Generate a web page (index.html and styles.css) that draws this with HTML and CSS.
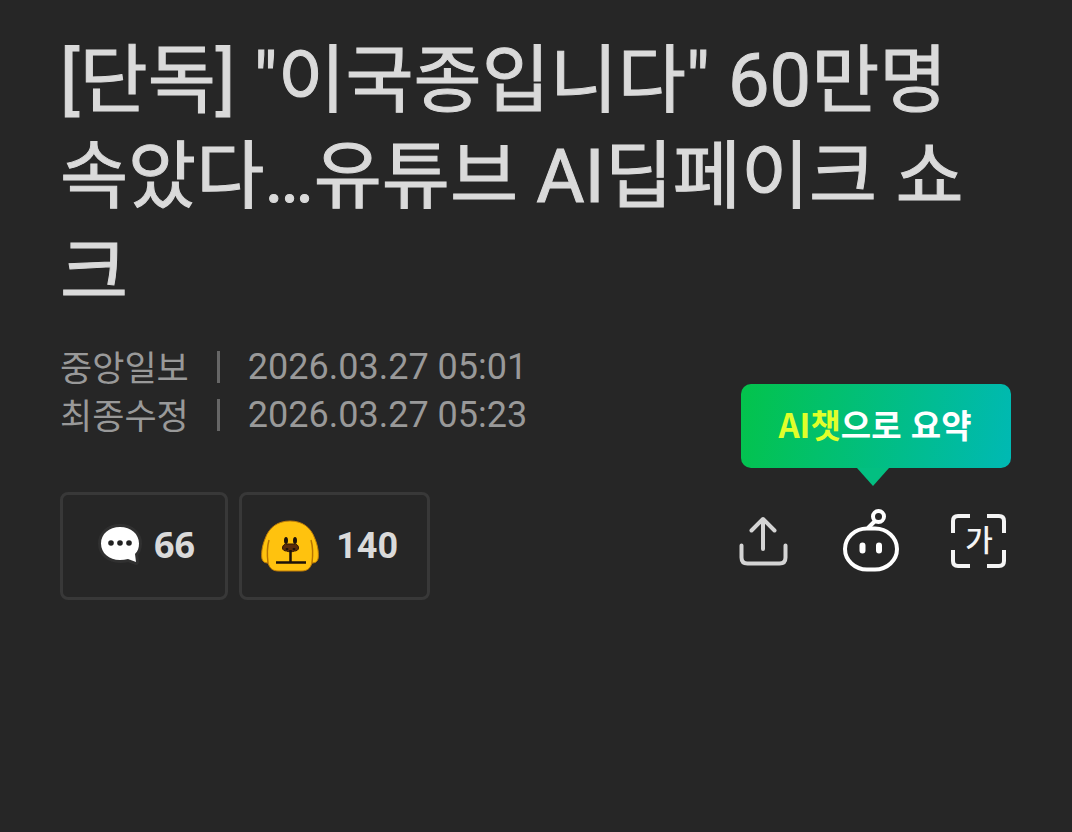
FILE: index.html
```html
<!DOCTYPE html>
<html lang="ko">
<head>
<meta charset="utf-8">
<meta name="viewport" content="width=device-width, initial-scale=1.0">
<title>[단독] "이국종입니다" 60만명 속았다…유튜브 AI딥페이크 쇼크</title>
<link rel="stylesheet" href="styles.css">
</head>
<body>
<main class="article">
  <h1 class="title">[단독] "이국종입니다" 60만명 속았다…유튜브 AI딥페이크 쇼크</h1>

  <dl class="meta">
    <div class="meta-row">
      <dt>중앙일보</dt>
      <dd><time datetime="2026-03-27T05:01">2026.03.27 05:01</time></dd>
    </div>
    <div class="meta-row">
      <dt>최종수정</dt>
      <dd><time datetime="2026-03-27T05:23">2026.03.27 05:23</time></dd>
    </div>
  </dl>

  <div class="toolbar">
    <div class="counts">
      <button class="count comment" type="button" aria-label="댓글 66">
        <svg width="46" height="50" viewBox="0 0 46 50" aria-hidden="true">
          <path d="M22 7C11 7 3 14 3 23.500S11 40 22 40q4 0 8-1l8 3-1-8c3-3 4-6 4-10.500C41 14 33 7 22 7z" fill="#fff" stroke="#303030" stroke-width="6" paint-order="stroke" stroke-linejoin="round"/>
          <circle cx="13" cy="23" r="2.800" fill="#222"/>
          <circle cx="22" cy="23" r="2.800" fill="#222"/>
          <circle cx="31" cy="23" r="2.800" fill="#222"/>
        </svg>
        <span>66</span>
      </button>
      <button class="count reaction" type="button" aria-label="공감 140">
        <svg width="58" height="52" viewBox="0 0 58 52" aria-hidden="true">
          <path d="M29 1C17 1 8 7 4 19 1 26 0 34 1 39c1 3 3 4 6 4 2 6 5 8 11 8h22c6 0 9-2 11-8 3 0 5-1 6-4 1-5 0-13-3-20C50 7 41 1 29 1z" fill="#ffc20e" stroke="#bd7b08" stroke-width="1"/>
          <path d="M8 20C6 27 6 35 7 43M50 20c2 7 2 15 1 23" fill="none" stroke="#b87400" stroke-width="1.500"/>
          <ellipse cx="25" cy="20.500" rx="2" ry="3.500" fill="#1c1209"/>
          <ellipse cx="34" cy="20.500" rx="2" ry="3.500" fill="#1c1209"/>
          <path d="M21.500 28c0-3 2-4 5-4h6c3 0 5 1 5 4 0 2-2 3-4 3-2 1-6 1-8 0-2 0-4-1-4-3z" fill="#5b2c0a" stroke="#2e1606" stroke-width="1"/>
          <path d="M26 28v2m7-2v2M29.500 30v12M15 42.500h30" fill="none" stroke="#1c1209" stroke-width="2.500"/>
        </svg>
        <span>140</span>
      </button>
    </div>

    <div class="tools">
      <button class="tool" type="button" aria-label="공유하기">
        <svg class="share" width="64" height="64" viewBox="0 0 64 64" aria-hidden="true">
          <path d="M31 41V11M19.500 22.500 31 11l11.500 11.500M9.500 37.500v12q0 6 6 6h32q6 0 6-6v-12"/>
        </svg>
      </button>
      <div class="summary">
        <button class="tool" type="button" aria-label="AI챗으로 요약" aria-describedby="summary-tip">
          <svg class="robot" width="64" height="64" viewBox="0 0 64 64" aria-hidden="true">
            <circle cx="39.500" cy="8.500" r="5.500"/>
            <path d="M36 13 29 20"/>
            <rect x="6" y="20.500" width="52" height="41" rx="22" ry="20.500"/>
            <path class="eyes" d="M23.500 37.500v5M40 37.500v5"/>
          </svg>
        </button>
        <div class="tip" id="summary-tip" role="tooltip"><em>AI챗</em>으로 요약</div>
      </div>
      <button class="tool" type="button" aria-label="글자 크기 변경">
        <svg class="frame" width="64" height="64" viewBox="0 0 64 64" aria-hidden="true">
          <path d="M7 25V13q0-5 5-5h12M41 8h12q5 0 5 5v12M58 42v11q0 5-5 5H41M24 58H12q-5 0-5-5V42"/>
          <text x="33" y="43">가</text>
        </svg>
      </button>
    </div>
  </div>
</main>
</body>
</html>
```

FILE: styles.css
```css
* {
  box-sizing: border-box;
}

body {
  margin: 0;
  background: #262626;
  color: #dadada;
  font-family: Roboto, "Noto Sans CJK KR", sans-serif;
}

.article {
  padding: 33px 60px;
}

.title {
  margin: 0;
  font-size: 74px;
  font-weight: 400;
  line-height: 96px;
  word-break: break-all;
  -webkit-text-stroke: 1px #dadada;
}

/* 언론사, 입력/수정 시각 */
.meta {
  margin: 22px 0 0;
  color: #999;
  font-size: 36px;
  line-height: 48px;
}

.meta-row {
  display: flex;
  align-items: flex-start;
}

.meta dt {
  font-family: "Noto Sans CJK KR", sans-serif;
  font-size: 35px;
  line-height: 45px;
}

.meta dd {
  display: flex;
  align-items: center;
  margin: 0;
}

.meta dd::before {
  content: "";
  width: 3px;
  height: 32px;
  margin: 0 28px;
  background: #666;
}

.toolbar {
  display: flex;
  justify-content: space-between;
  margin-top: 53px;
}

button {
  padding: 0;
  border: 0;
  background: none;
  color: inherit;
  font-family: inherit;
  cursor: pointer;
}

.counts {
  display: flex;
  gap: 11px;
}

.count {
  display: flex;
  align-items: center;
  height: 108px;
  border: 3px solid #383838;
  border-radius: 8px;
  font-size: 36px;
  font-weight: 700;
}

.comment {
  gap: 10px;
  padding: 0 30px 3px 35px;
  font-family: "Noto Sans", sans-serif;
}

.reaction {
  gap: 17px;
  padding: 0 29px 0 19px;
}

.tools {
  display: flex;
  align-items: flex-start;
  gap: 43px;
  margin-right: 2px;
  padding-top: 16px;
}

.tool {
  display: block;
}

.tool svg {
  display: block;
  fill: none;
  stroke: #f4f4f4;
  stroke-width: 4;
}

.tool .share {
  stroke: #d4d4d4;
  stroke-linecap: round;
  stroke-linejoin: round;
}

.tool .robot {
  stroke: #fff;
}

.robot .eyes {
  stroke-width: 6;
  stroke-linecap: round;
}

.frame text {
  fill: #f4f4f4;
  stroke: none;
  font-family: "Noto Sans CJK KR", sans-serif;
  font-size: 30px;
  font-weight: 500;
  text-anchor: middle;
}

.summary {
  position: relative;
}

/* 말풍선 */
.tip {
  position: absolute;
  right: -108px;
  bottom: 104px;
  width: 270px;
  padding: 0 2px 4px 0;
  border-radius: 10px;
  background: linear-gradient(100deg, #03c34b, #00b9b4);
  color: #fff;
  font-family: "Noto Sans CJK KR", sans-serif;
  font-size: 33px;
  font-weight: 700;
  line-height: 80px;
  text-align: center;
  white-space: nowrap;
}

.tip::after {
  content: "";
  position: absolute;
  top: 100%;
  left: 116px;
  border: 16px solid transparent;
  border-top: 18px solid #03bf81;
  border-bottom: 0;
}

.tip em {
  color: #e0ff2a;
  font-style: normal;
}
```
